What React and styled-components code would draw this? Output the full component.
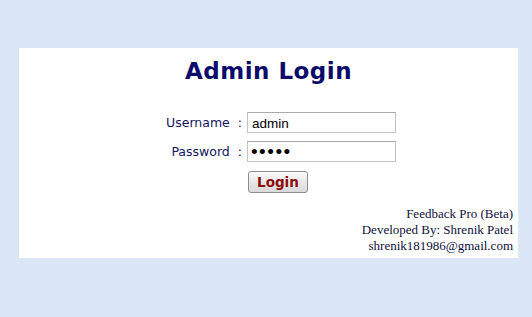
import React from "react";
import styled, { createGlobalStyle } from "styled-components";

const Global = createGlobalStyle`
  html, body { margin: 0; padding: 0; }
  body { background: #dbe7f7; width: 532px; height: 317px; overflow: hidden; }
`;

const Page = styled.div`
  padding: 48px 14px 0 19px;
`;

const Panel = styled.div`
  background: #ffffff;
  width: 499px;
  height: 210px;
  box-sizing: border-box;
  padding-top: 9px;
  display: flex;
  flex-direction: column;
`;

const Title = styled.h1`
  margin: 0;
  text-align: center;
  font-family: "DejaVu Sans", Verdana, sans-serif;
  font-weight: bold;
  font-size: 23px;
  line-height: 28px;
  color: #0b0b6b;
  letter-spacing: 0.5px;
`;

const Form = styled.div`
  margin-top: 27px;
  display: grid;
  grid-template-columns: auto 149px;
  column-gap: 5px;
  row-gap: 8px;
  justify-content: center;
  padding-left: 25px;
  align-items: center;
`;

const Label = styled.label`
  font-family: "DejaVu Sans", Verdana, sans-serif;
  font-size: 12.5px;
  color: #14145e;
  text-align: right;
  white-space: pre;
`;

const Input = styled.input`
  box-sizing: border-box;
  width: 149px;
  height: 21px;
  margin: 0;
  padding: ${(p) => (p.type === "password" ? "0 3px" : "1px 4px 0")};
  border: 1px solid #c4c4c4;
  border-top-color: #a9a9a9;
  font-family: "Liberation Sans", Arial, sans-serif;
  font-size: ${(p) => (p.type === "password" ? "19px" : "13.5px")};
  letter-spacing: ${(p) => (p.type === "password" ? "1.5px" : "0")};
  color: #000;
  outline: none;
  background: #fff;
`;

const Button = styled.button`
  grid-column: 2;
  justify-self: start;
  margin: 1px 0 0 1px;
  width: 60px;
  height: 22px;
  padding: 0;
  border: 1px solid #8e8e8e;
  border-radius: 3px;
  background: linear-gradient(#fbfbfb, #e6e6e6 55%, #d9d9d9);
  font-family: "DejaVu Sans", Verdana, sans-serif;
  font-weight: bold;
  font-size: 13.5px;
  color: #8b0a0a;
  cursor: pointer;
`;

const Credits = styled.div`
  margin-top: auto;
  padding: 0 5px 4px 0;
  text-align: right;
  font-family: "Liberation Serif", "Times New Roman", serif;
  font-size: 13px;
  line-height: 16px;
  color: #10103e;
`;

export default function App() {
  return (
    <>
      <Global />
      <Page>
        <Panel>
          <Title>Admin Login</Title>
          <Form>
            <Label htmlFor="u">Username  :</Label>
            <Input id="u" type="text" defaultValue="admin" />
            <Label htmlFor="p">Password  :</Label>
            <Input id="p" type="password" defaultValue="admin" />
            <Button>Login</Button>
          </Form>
          <Credits>
            <div>Feedback Pro (Beta)</div>
            <div>Developed By: Shrenik Patel</div>
            <div>shrenik181986@gmail.com</div>
          </Credits>
        </Panel>
      </Page>
    </>
  );
}
